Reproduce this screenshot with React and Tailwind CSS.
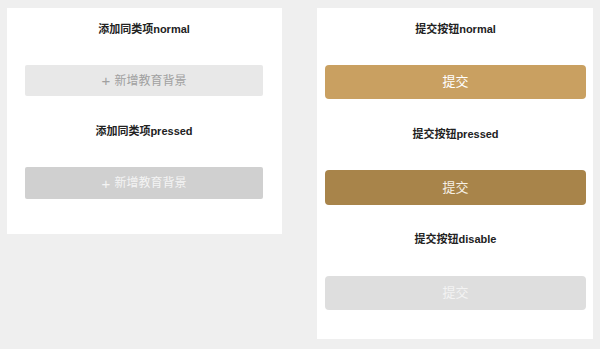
const font = { fontFamily: '"Liberation Sans", "Noto Sans CJK SC", sans-serif' };

function Title({ children, className = "" }) {
  return (
    <div className={`h-4 text-center text-[11px] leading-4 font-bold text-[#222] ${className}`}>
      {children}
    </div>
  );
}

function AddButton({ pressed, className = "" }) {
  return (
    <div
      className={`flex items-center justify-center rounded-[2px] text-[12px] ${
        pressed ? "h-[32px] bg-[#d0d0d0] text-[#f4f4f4]" : "h-[31px] bg-[#e8e8e8] text-[#a0a0a0]"
      } ${className}`}
    >
      <span className="mr-1 text-[15px] leading-none">+</span>
      新增教育背景
    </div>
  );
}

function SubmitButton({ variant, className = "" }) {
  const styles = {
    normal: "h-[34px] bg-[#c9a061] text-white",
    pressed: "h-[35px] bg-[#a8844a] text-[#f6f0e6]",
    disable: "h-[34px] bg-[#dedede] text-[#f3f3f3]",
  };
  return (
    <div className={`flex items-center justify-center rounded-[4px] text-[13px] ${styles[variant]} ${className}`}>
      提交
    </div>
  );
}

export default function App() {
  return (
    <div className="flex min-h-[349px] w-[600px] items-start gap-[35px] bg-[#efefef] pt-2 pl-[7px]" style={font}>
      <div className="flex h-[226px] w-[275px] flex-col bg-white pt-[13px] pr-[19px] pl-[18px]">
        <Title>添加同类项normal</Title>
        <AddButton className="mt-[28px]" />
        <Title className="mt-[27px]">添加同类项pressed</Title>
        <AddButton pressed className="mt-[28px]" />
      </div>
      <div className="flex h-[331px] w-[276px] flex-col bg-white pt-[13px] pr-[7px] pl-2">
        <Title>提交按钮normal</Title>
        <SubmitButton variant="normal" className="mt-[28px]" />
        <Title className="mt-[27px]">提交按钮pressed</Title>
        <SubmitButton variant="pressed" className="mt-[28px]" />
        <Title className="mt-[26px]">提交按钮disable</Title>
        <SubmitButton variant="disable" className="mt-[29px]" />
      </div>
    </div>
  );
}
